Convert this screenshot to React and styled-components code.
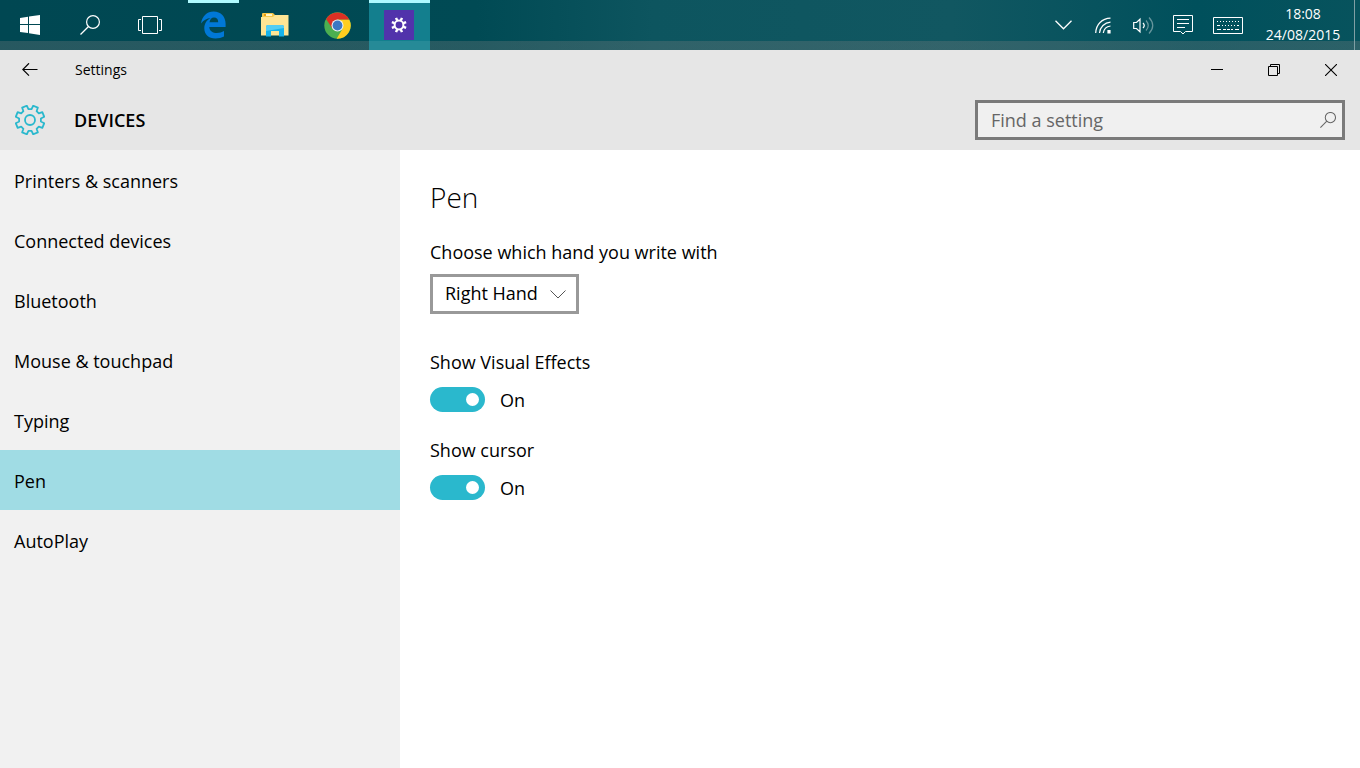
import React, { useState } from "react";
import styled, { createGlobalStyle } from "styled-components";

const GlobalStyle = createGlobalStyle`
  * {
    box-sizing: border-box;
  }

  body {
    margin: 0;
    color: #000;
    font-family: "Open Sans", "Noto Sans", sans-serif;
    font-size: 18px;
    line-height: 24px;
  }

  button,
  input,
  select {
    font: inherit;
    color: inherit;
  }

  svg {
    display: block;
  }
`;

const Window = styled.div`
  display: flex;
  flex-direction: column;
  min-height: 100vh;
  background-color: #fff;
`;

const Taskbar = styled.header`
  display: flex;
  justify-content: space-between;
  height: 50px;
  color: #fff;
  background:
    linear-gradient(transparent 41px, rgba(128, 128, 128, 0.3) 41px),
    linear-gradient(90deg, #004752 0%, #004a54 35%, #0d555f 48%, #115761 70%, #00505c 88%, #07535d 100%);
`;

const TaskGroup = styled.div`
  display: flex;
`;

const SystemButton = styled.button`
  display: flex;
  align-items: center;
  justify-content: center;
  width: 60px;
  padding: 0;
  border: none;
  background: none;
`;

const Apps = styled.div`
  display: flex;
  gap: 1px;
  margin-left: 3px;
`;

const AppButton = styled(SystemButton)`
  width: 61px;
  padding-right: 1px;
  background: ${({ $active, $running }) => {
    const line = "linear-gradient(#affaff, #affaff)";
    if ($active) return `${line} top / 100% 3px no-repeat, linear-gradient(#137f8e 41px, #268a97 41px)`;
    if ($running) return `${line} top / 51px 3px no-repeat`;
    return "none";
  }};
`;

const SettingsTile = styled.span`
  display: flex;
  align-items: center;
  justify-content: center;
  width: 30px;
  height: 30px;
  background-color: #5133ab;
`;

const TrayButton = styled(SystemButton)`
  width: ${({ $wide }) => ($wide ? "50px" : "40px")};
`;

const Clock = styled.button`
  width: 100px;
  padding: 3px 0 5px;
  border: none;
  background: none;
  font-size: 14px;
  line-height: 21px;
  text-align: center;

  time {
    display: block;
  }
`;

const ShowDesktop = styled.button`
  width: 6px;
  margin-left: 1px;
  padding: 0;
  border: none;
  border-left: 1px solid #7f9fa4;
  background: none;
`;

const TitleBar = styled.div`
  display: flex;
  align-items: center;
  height: 40px;
  padding-right: 1px;
  background-color: #e6e6e6;
`;

const TitleText = styled.span`
  flex: 1;
  padding-left: 15px;
  font-size: 14px;
`;

const WindowButton = styled.button`
  display: flex;
  align-items: center;
  justify-content: center;
  width: 57px;
  height: 40px;
  padding: 0;
  border: none;
  background: none;
`;

const BackButton = styled(WindowButton)`
  width: 60px;
`;

const PageHeader = styled.div`
  display: flex;
  align-items: center;
  height: 60px;
  padding: 0 15px;
  background-color: #e6e6e6;
`;

const Section = styled.h1`
  flex: 1;
  margin: 0;
  padding-left: 29px;
  font-size: 18px;
  font-weight: 600;
`;

const SearchBox = styled.label`
  display: flex;
  align-items: center;
  width: 370px;
  height: 40px;
  padding: 0 6px 0 13px;
  border: 3px solid #7a7a7a;
  background-color: #f0f0f0;
  color: #666;
`;

const SearchInput = styled.input`
  flex: 1;
  min-width: 0;
  padding: 0;
  border: none;
  outline: none;
  background: none;

  &::placeholder {
    color: #666;
    opacity: 1;
  }
`;

const Body = styled.div`
  display: flex;
  flex: 1;
`;

const Sidebar = styled.nav`
  width: 400px;
  background-color: #f1f1f1;
`;

const NavItem = styled.a`
  display: flex;
  align-items: center;
  height: 60px;
  padding: 2px 14px 0;
  color: #000;
  text-decoration: none;
  background-color: ${({ $active }) => ($active ? "#a0dce4" : "transparent")};
`;

const Content = styled.main`
  flex: 1;
  padding: 27px 30px;
`;

const PageTitle = styled.h2`
  margin: 0 0 23px;
  font-size: 28px;
  font-weight: 300;
  line-height: 40px;
`;

const FieldLabel = styled.label`
  display: block;
`;

const SelectWrap = styled.div`
  display: inline-grid;
  align-items: center;
  width: 149px;
  margin: 10px 0 36px;
`;

const Select = styled.select`
  grid-area: 1 / 1;
  width: 100%;
  height: 40px;
  padding: 0 12px 2px;
  border: 3px solid #999;
  border-radius: 0;
  appearance: none;
  background-color: #fff;
`;

const SelectArrow = styled.svg`
  grid-area: 1 / 1;
  justify-self: end;
  margin-right: 13px;
  pointer-events: none;
`;

const ToggleField = styled.div`
  margin-bottom: 26px;
`;

const ToggleRow = styled.div`
  display: flex;
  align-items: center;
  gap: 15px;
  margin-top: 13px;
`;

const Switch = styled.input`
  display: flex;
  align-items: center;
  justify-content: ${({ checked }) => (checked ? "flex-end" : "flex-start")};
  width: 55px;
  height: 25px;
  margin: 0;
  padding: 0 6px;
  border: ${({ checked }) => (checked ? "none" : "3px solid #333")};
  border-radius: 13px;
  appearance: none;
  background-color: ${({ checked }) => (checked ? "#2ab8cd" : "#fff")};

  &::before {
    content: "";
    width: 13px;
    height: 13px;
    border-radius: 50%;
    background-color: ${({ checked }) => (checked ? "#fff" : "#333")};
  }
`;

const toothedPath = (teeth, center, outer, inner) => {
  const step = (Math.PI * 2) / teeth;
  const points = [];
  for (let i = 0; i < teeth; i++) {
    const mid = i * step + step / 2;
    [
      [inner, -0.32],
      [outer, -0.22],
      [outer, 0.22],
      [inner, 0.32],
    ].forEach(([radius, offset]) => {
      const angle = mid + offset * step;
      points.push(`${center + radius * Math.sin(angle)} ${center - radius * Math.cos(angle)}`);
    });
  }
  return `M${points.join("L")}Z`;
};

const WindowsIcon = () => (
  <svg width="20" height="20" viewBox="0 0 20 20" fill="#fff">
    <path d="M0 3L8 1.8V9H0zM9 1.6L20 0v9H9zM0 10h8v8L0 17zM9 10h11v10L9 18.2z" />
  </svg>
);

const SearchIcon = ({ size, strokeWidth }) => (
  <svg width={size} height={size} viewBox="0 0 20 20" fill="none" stroke="currentColor" strokeWidth={strokeWidth}>
    <circle cx="13" cy="7" r="6.4" />
    <path d="M8.5 11.5L.5 19.5" />
  </svg>
);

const TaskViewIcon = () => (
  <svg width="24" height="18" viewBox="0 0 24 18" fill="none" stroke="#fff">
    <path d="M4.5.5h15v17h-15zM3 3.5H.5v11H3M21 3.5h2.5v11H21" />
  </svg>
);

const EdgeIcon = () => (
  <svg width="25" height="28" viewBox="0 0 25 28" fill="#0078d7">
    <path d="M0 12.5C1.2 5 6 .5 12.6.5 20 .5 24.6 6 24.6 12.6V16H8.3c.2 4 3.6 6 7.6 6 2.7 0 5-.7 7.1-2v5.5c-2.4 1.3-5.3 2-8.5 2C7.7 27.5 3.3 23.3 3.3 17.2c0-4.7 2.5-8.3 6.5-10.2C5.7 7.3 2.5 9.3 0 12.5zM8.5 11.2h8.7c0-3-1.4-4.6-4.2-4.6-2.5 0-4 1.9-4.5 4.6z" />
  </svg>
);

const FolderIcon = () => (
  <svg width="28" height="24" viewBox="0 0 28 24">
    <path d="M1 1q0-1 1-1h10l2 2h12v20H1z" fill="#f5c84c" />
    <path d="M3 1h8v2H3z" fill="#fff4c8" />
    <path d="M3 1h2v2H3z" fill="#e89a10" />
    <path d="M0 4h12l2-2h13.5v20.5H0z" fill="#ffe594" />
    <path d="M5 23.5V14q0-2 2-2h14q2 0 2 2v9.5h-5V18h-8v5.5z" fill="#18b4ea" />
    <path d="M5 14q0-2 2-2h14q2 0 2 2v1L5 18z" fill="#53cdf4" />
  </svg>
);

const ChromeIcon = () => (
  <svg width="27" height="27" viewBox="0 0 27 27">
    <circle cx="13.5" cy="13.5" r="13.2" fill="#4caf50" />
    <path d="M13.5 7.5h11.7A13.2 13.2 0 0 1 12.6 26.7L18.7 16.5z" fill="#ffce1f" />
    <path d="M2.1 6.9A13.2 13.2 0 0 1 25.2 7.5H13.5L8.3 16.5z" fill="#dc3024" />
    <circle cx="13.5" cy="13.5" r="6" fill="#f3f3f3" />
    <circle cx="13.5" cy="13.5" r="4.9" fill="#3b78c4" />
  </svg>
);

const TileGearIcon = () => (
  <svg width="16" height="16" viewBox="0 0 16 16" fill="none" stroke="#fff">
    <circle cx="8" cy="8" r="4.4" strokeWidth="2" />
    <g strokeWidth="2.4">
      {[22.5, 67.5, 112.5, 157.5].map((angle) => (
        <path key={angle} d="M8 .3v2.9M8 12.8v2.9" transform={`rotate(${angle} 8 8)`} />
      ))}
    </g>
  </svg>
);

const GearIcon = () => (
  <svg width="30" height="30" viewBox="0 0 30 30" fill="none" stroke="#2ab8cd" strokeWidth="1.8" strokeLinejoin="round">
    <path d={toothedPath(8, 15, 14.6, 11)} />
    <circle cx="15" cy="15" r="5" />
  </svg>
);

const ChevronIcon = () => (
  <svg width="17" height="10" viewBox="0 0 17 10" fill="none" stroke="#fff" strokeWidth="1.3">
    <path d="M.5.8l8 8 8-8" />
  </svg>
);

const WifiIcon = () => (
  <svg width="16" height="17" viewBox="0 0 16 17" fill="none" stroke="#fff" strokeWidth="1.2">
    <path d="M.7 16C1 7.5 7 1.5 15.5 1.2M4.5 16C5 10 9.5 5.5 15.5 5.2M8.3 16c.5-3.8 3.2-6.5 7.2-7" />
    <path d="M13 13.5h2V16h-2z" fill="#fff" />
  </svg>
);

const SoundIcon = () => (
  <svg width="21" height="19" viewBox="0 0 21 19" fill="none" stroke="#fff" strokeWidth="1.2">
    <path d="M.7 6.5h2.8L7 3.2v12.6l-3.5-3.3H.7z" />
    <path d="M10 7q2.500 2.500 0 5" />
    <path d="M13 4.5q4.500 5 0 10M16 1.5q7.500 8 0 16" opacity=".4" />
  </svg>
);

const ActionCenterIcon = () => (
  <svg width="20" height="20" viewBox="0 0 20 20" fill="none" stroke="#fff">
    <path d="M.5.5h19v16h-7L10 19l-2.5-2.5h-7zM4 4.500h12M4 8.500h12M4 12.500h8" />
  </svg>
);

const KeyboardIcon = () => (
  <svg width="30" height="17" viewBox="0 0 30 17" fill="none" stroke="#fff">
    <path d="M.5.5h29v16H.5z" />
    <path d="M4 4.5h22" strokeDasharray="1 2" />
    <path d="M4 8.5h3M9 8.5h1M12 8.5h1M15 8.5h1M18 8.5h1M21 8.5h1M24 8.5h2" />
    <path d="M4 12.5h4M10 12.5h3M14 12.5h3M18 12.5h2M22 12.5h4" />
  </svg>
);

const BackIcon = () => (
  <svg width="16" height="14" viewBox="0 0 16 14" fill="none" stroke="#000" strokeWidth="1.2">
    <path d="M15.5 6.500H1M7 .3L.8 6.500 7 12.700" />
  </svg>
);

const MinimizeIcon = () => (
  <svg width="12" height="12" viewBox="0 0 12 12" stroke="#000">
    <path d="M0 5.5h12" />
  </svg>
);

const RestoreIcon = () => (
  <svg width="12" height="12" viewBox="0 0 12 12" fill="none" stroke="#000">
    <path d="M.5 2.5h9v9h-9zM2.5 2.5v-2h9v9h-2" />
  </svg>
);

const CloseIcon = () => (
  <svg width="12" height="12" viewBox="0 0 12 12" stroke="#000" strokeWidth="1.1">
    <path d="M0 0l12 12M12 0L0 12" />
  </svg>
);

const navItems = [
  "Printers & scanners",
  "Connected devices",
  "Bluetooth",
  "Mouse & touchpad",
  "Typing",
  "Pen",
  "AutoPlay",
];

const Toggle = ({ id, label }) => {
  const [on, setOn] = useState(true);

  return (
    <ToggleField>
      <FieldLabel htmlFor={id}>{label}</FieldLabel>
      <ToggleRow>
        <Switch id={id} type="checkbox" role="switch" checked={on} onChange={() => setOn(!on)} />
        <span>{on ? "On" : "Off"}</span>
      </ToggleRow>
    </ToggleField>
  );
};

const App = () => {
  const [page, setPage] = useState("Pen");

  return (
    <Window>
      <GlobalStyle />
      <Taskbar>
        <TaskGroup>
          <SystemButton aria-label="Start">
            <WindowsIcon />
          </SystemButton>
          <SystemButton aria-label="Search">
            <SearchIcon size={20} strokeWidth={1.2} />
          </SystemButton>
          <SystemButton aria-label="Task view">
            <TaskViewIcon />
          </SystemButton>
          <Apps>
            <AppButton aria-label="Edge" $running>
              <EdgeIcon />
            </AppButton>
            <AppButton aria-label="File Explorer">
              <FolderIcon />
            </AppButton>
            <AppButton aria-label="Chrome">
              <ChromeIcon />
            </AppButton>
            <AppButton aria-label="Settings" $active>
              <SettingsTile>
                <TileGearIcon />
              </SettingsTile>
            </AppButton>
          </Apps>
        </TaskGroup>
        <TaskGroup>
          <TrayButton aria-label="Show hidden icons">
            <ChevronIcon />
          </TrayButton>
          <TrayButton aria-label="Network">
            <WifiIcon />
          </TrayButton>
          <TrayButton aria-label="Volume">
            <SoundIcon />
          </TrayButton>
          <TrayButton aria-label="Action center">
            <ActionCenterIcon />
          </TrayButton>
          <TrayButton aria-label="Touch keyboard" $wide>
            <KeyboardIcon />
          </TrayButton>
          <Clock>
            <time>18:08</time>
            <time dateTime="2015-08-24">24/08/2015</time>
          </Clock>
          <ShowDesktop aria-label="Show desktop" />
        </TaskGroup>
      </Taskbar>

      <TitleBar>
        <BackButton aria-label="Back">
          <BackIcon />
        </BackButton>
        <TitleText>Settings</TitleText>
        <WindowButton aria-label="Minimize">
          <MinimizeIcon />
        </WindowButton>
        <WindowButton aria-label="Restore">
          <RestoreIcon />
        </WindowButton>
        <WindowButton aria-label="Close">
          <CloseIcon />
        </WindowButton>
      </TitleBar>

      <PageHeader>
        <GearIcon />
        <Section>DEVICES</Section>
        <SearchBox>
          <SearchInput type="text" placeholder="Find a setting" aria-label="Find a setting" />
          <SearchIcon size={16} strokeWidth={1.3} />
        </SearchBox>
      </PageHeader>

      <Body>
        <Sidebar>
          {navItems.map((item) => (
            <NavItem key={item} href="#" $active={item === page} onClick={() => setPage(item)}>
              {item}
            </NavItem>
          ))}
        </Sidebar>
        <Content>
          <PageTitle>Pen</PageTitle>
          <FieldLabel htmlFor="hand">Choose which hand you write with</FieldLabel>
          <SelectWrap>
            <Select id="hand" defaultValue="Right Hand">
              <option>Right Hand</option>
              <option>Left Hand</option>
            </Select>
            <SelectArrow width="16" height="9" viewBox="0 0 16 9" fill="none" stroke="#555">
              <path d="M.5.5L8 8 15.5.5" />
            </SelectArrow>
          </SelectWrap>
          <Toggle id="effects" label="Show Visual Effects" />
          <Toggle id="cursor" label="Show cursor" />
        </Content>
      </Body>
    </Window>
  );
};

export default App;
